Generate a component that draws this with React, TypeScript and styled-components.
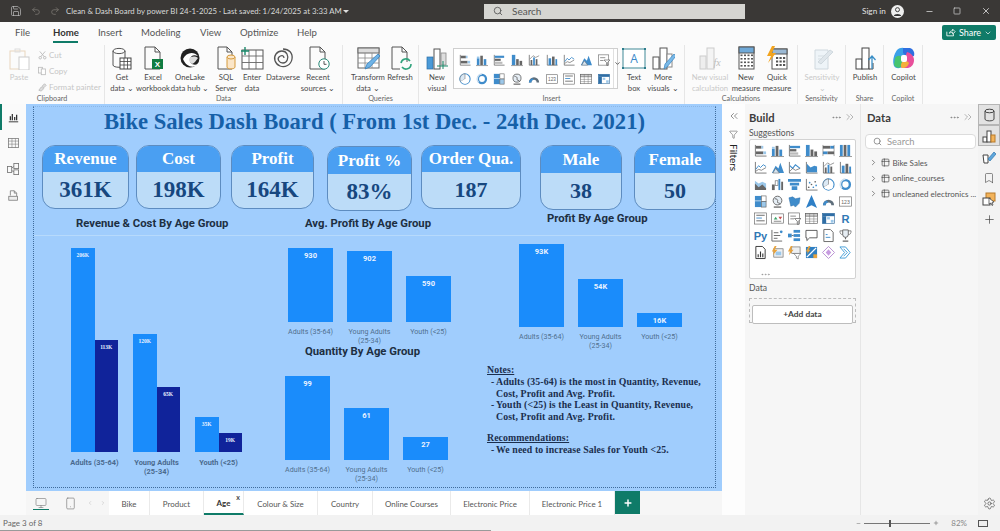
import React from "react";
import styled, { createGlobalStyle } from "styled-components";
import { Search, Minus, Square, X, ChevronDown, ChevronRight, ChevronsLeft, ChevronsRight, Bookmark, Plus, Settings, Undo2, Redo2, Save, Filter, Monitor, Smartphone, Table2, ChevronLeft, MoreHorizontal } from "lucide-react";

const Global = createGlobalStyle`
  html, body { margin: 0; padding: 0; background: #fff; }
  * { box-sizing: border-box; }
  body { font-family: "Lato", "Open Sans", "Liberation Sans", sans-serif; }
`;
const Page = styled.div`width:1000px;height:531px;display:flex;flex-direction:column;overflow:hidden;background:#fbfbfb;`;

/* ---------- Title bar ---------- */
const TitleBarRow = styled.header`height:22px;background:#3a3836;color:#e6e6e6;display:flex;align-items:center;flex:none;position:relative;overflow:hidden;`;
const QuickIcon = styled.span<{ $w: number; $dim?: boolean; $ml?: number }>`width:${p => p.$w}px;flex:none;margin-left:${p => p.$ml ?? 0}px;display:flex;justify-content:center;color:${p => (p.$dim ? "#77736f" : "#c8c8c8")};`;
const DocTitle = styled.span`font-size:7.8px;margin-left:4px;white-space:nowrap;color:#d8d8d8;width:277px;flex:none;`;
const Caret = styled.span`width:0;height:0;flex:none;border-left:3px solid transparent;border-right:3px solid transparent;border-top:3px solid #ddd;margin-right:135px;`;
const SearchBox = styled.div`width:261px;flex:none;height:15px;background:#d5d5d1;display:flex;align-items:center;gap:9px;padding-left:9px;color:#555;font-size:10px;`;
const SignIn = styled.span`font-size:8.2px;margin-left:117px;width:28.500px;flex:none;color:#e2e2e2;`;
const Avatar = styled.span`width:13px;height:13px;flex:none;border-radius:50%;background:#eee;display:flex;align-items:center;justify-content:center;`;
const WinButton = styled.span<{ $w: number; $ml?: number }>`width:${p => p.$w}px;flex:none;margin-left:${p => p.$ml ?? 0}px;display:flex;justify-content:center;color:#ddd;`;

/* ---------- Ribbon ---------- */
const Ribbon = styled.section`height:82px;background:#fbfbfb;flex:none;display:flex;flex-direction:column;`;
const TabRow = styled.nav`height:23px;display:flex;align-items:center;padding-left:15px;position:relative;font-size:9.6px;color:#4d4d4d;`;
const RibbonTab = styled.span<{ $w: number; $on?: boolean }>`width:${p => p.$w}px;height:23px;line-height:22px;position:relative;font-weight:${p => (p.$on ? 700 : 400)};color:${p => (p.$on ? "#333" : "#555")};
  ${p => p.$on ? `&::after{content:"";position:absolute;left:0;top:19px;width:25px;height:2px;background:#0f7b68;}` : ""}`;
const ShareButton = styled.button`position:absolute;left:942px;top:3px;width:54px;height:15px;border:0;border-radius:2px;background:#0f7b68;color:#fff;font:9px "Lato",sans-serif;display:flex;align-items:center;justify-content:center;gap:3px;padding:0;`;
const GroupRow = styled.div`flex:1;display:flex;height:59px;`;
const Group = styled.div<{ $w: number; $last?: boolean }>`width:${p => p.$w}px;flex:none;display:flex;flex-direction:column;${p => (p.$last ? "" : "border-right:1px solid #e6e6e6;")}`;
const GroupBody = styled.div<{ $pad?: number }>`flex:1;display:flex;padding-left:${p => p.$pad ?? 0}px;`;
const GroupLabel = styled.div`height:10px;line-height:10px;font-size:7.2px;text-align:center;color:#666;`;
const RibbonItem = styled.div<{ $w: number; $dim?: boolean; $ml?: number }>`width:${p => p.$w}px;flex:none;margin-left:${p => p.$ml ?? 0}px;display:flex;flex-direction:column;align-items:center;font-size:7.7px;line-height:10.5px;text-align:center;color:${p => (p.$dim ? "#c9c9c9" : "#4a4a4a")};white-space:nowrap;padding-top:1px;`;
const IconSlot = styled.div`height:24px;margin-bottom:2px;display:flex;align-items:flex-end;`;
const ClipColumn = styled.div`display:flex;flex-direction:column;gap:4px;font-size:8px;color:#c6c6c6;padding-top:4px;`;
const ClipRow = styled.div`display:flex;align-items:center;gap:2px;height:12px;white-space:nowrap;`;
const GalleryBox = styled.div`width:165px;height:41px;margin:3px 8px 0 5px;border:1px solid #cfcfcf;background:#fff;display:flex;flex:none;`;
const GalleryGrid = styled.div`flex:1;display:grid;grid-template-columns:repeat(9,17.4px);grid-auto-rows:19px;align-items:center;justify-items:center;padding:1px 0 0 2px;`;
const GalleryScroll = styled.div`width:10px;border-left:1px solid #e0e0e0;color:#555;display:flex;align-items:center;justify-content:center;padding-bottom:10px;`;

/* ---------- Body ---------- */
const Main = styled.main`height:411px;display:flex;flex:none;`;
const LeftRail = styled.aside`width:26px;flex:none;background:#fafafa;display:flex;flex-direction:column;position:relative;`;
const RailActive = styled.span`position:absolute;left:0;top:0;width:2px;height:26px;background:#0f7b68;`;
const RailIcon = styled.div`height:26px;display:flex;align-items:center;justify-content:center;color:#666;`;
const Center = styled.div`width:696px;flex:none;display:flex;flex-direction:column;`;
const Canvas = styled.div`height:387px;background:#a0cdfd;position:relative;flex:none;overflow:hidden;`;
const DotFrame = styled.div`position:absolute;left:7px;top:2px;width:683px;height:382px;border:1px dotted #3f6c9c;border-top-color:#8db8e6;`;
const Divider = styled.div`position:absolute;left:8px;top:131px;width:680px;height:1px;background:#b7dafc;`;
const Visual = styled.div<{ $x: number; $y: number }>`position:absolute;left:${p => p.$x}px;top:${p => p.$y}px;`;
const Heading = styled.h1`margin:0;width:683px;text-align:center;font:700 22.650px/26px "Liberation Serif",serif;color:#1660a8;white-space:nowrap;`;
const Kpi = styled.div<{ $w: number; $h: number }>`width:${p => p.$w}px;height:${p => p.$h}px;border:1px solid #5d8cc0;border-radius:13px;overflow:hidden;background:#bcdcf8;display:flex;flex-direction:column;`;
const KpiHead = styled.div<{ $h: number }>`height:${p => p.$h}px;flex:none;background:#4a9ff2;color:#fff;display:flex;align-items:center;justify-content:center;font:700 17px "Liberation Serif",serif;`;
const KpiValue = styled.div<{ $big?: boolean }>`flex:1;display:flex;align-items:center;justify-content:center;color:#17477f;font:700 ${p => (p.$big ? 23 : 22)}px "Liberation Serif",serif;`;
const SectionLabel = styled.div`font:700 11.3px "Roboto","Liberation Sans",sans-serif;color:#1d2f42;white-space:nowrap;`;
const ChartRow = styled.div<{ $gap: number }>`display:flex;gap:${p => p.$gap}px;`;
const ChartColumn = styled.div<{ $w: number }>`width:${p => p.$w}px;display:flex;flex-direction:column;align-items:center;`;
const Plot = styled.div<{ $h: number }>`height:${p => p.$h}px;width:100%;display:flex;align-items:flex-end;`;
const Bar = styled.div<{ $h: number; $dark?: boolean; $big?: boolean }>`flex:1;height:${p => p.$h}px;background:${p => (p.$dark ? "#10239a" : "#1a8cfb")};color:#e9f2ff;text-align:center;padding-top:3px;font:700 ${p => (p.$big ? "7.5px" : "5.5px")}/9px ${p => (p.$big ? '"Roboto",sans-serif' : '"Liberation Serif",serif')};`;
const AxisLabel = styled.div<{ $bold?: boolean }>`margin:${p => (p.$bold ? "6px -12px 0" : "5px -10px 0")};text-align:center;font:${p => (p.$bold ? 700 : 400)} ${p => (p.$bold ? 7.4 : 7.1)}px/9px "Roboto","Liberation Sans",sans-serif;color:${p => (p.$bold ? "#4a6a8e" : "#50708f")};white-space:pre-line;`;
const Notes = styled.div`font:700 9.8px/11.4px "Liberation Serif",serif;letter-spacing:.1px;color:#1b2f4e;width:225px;`;
const NoteHead = styled.div`text-decoration:underline;`;
const NoteList = styled.ul`list-style:none;margin:1px 0 0;padding:0 0 0 5px;`;
const NoteItem = styled.li`position:relative;padding-left:4px;width:215px;&::before{content:"-";position:absolute;left:-1px;top:0;}`;
const NoteSpacer = styled.div`height:10px;`;

/* ---------- Filters / panes ---------- */
const FilterPane = styled.aside`width:23px;flex:none;background:#fdfdfd;display:flex;flex-direction:column;align-items:center;padding-top:6px;color:#444;`;
const VerticalText = styled.span`writing-mode:vertical-rl;font-size:10px;font-weight:400;margin-top:5px;color:#222;`;
const Pane = styled.aside<{ $w: number; $line?: boolean; $pl?: number }>`width:${p => p.$w}px;flex:none;background:#f6f6f6;padding:6px 4px 0 ${p => p.$pl ?? 4}px;display:flex;flex-direction:column;${p => (p.$line ? "border-right:1px solid #e6e6e6;" : "")}`;
const PaneHead = styled.div`display:flex;align-items:center;height:14px;font-size:11.2px;font-weight:700;color:#3c3c3c;`;
const PaneTools = styled.span`margin-left:auto;display:flex;align-items:center;gap:2px;color:#888;`;
const SubLabel = styled.div<{ $mt: number }>`font-size:8.6px;color:#555;margin-top:${p => p.$mt}px;height:11px;line-height:11px;`;
const VizBox = styled.div`width:107px;height:140px;flex:none;background:#fff;border:1px solid #d2d2d2;border-radius:2px;margin-top:0;padding:2px 2px 0 2px;`;
const VizGrid = styled.div`display:grid;grid-template-columns:repeat(6,17px);grid-auto-rows:17px;align-items:center;justify-items:center;`;
const VizDots = styled.div`color:#888;padding:8px 0 0 8px;display:flex;`;
const DashBox = styled.div`width:107px;height:25px;border:1px dashed #bdbdbd;margin-top:4px;padding:2px;`;
const AddData = styled.button`width:100%;height:100%;border:1px solid #bdbdbd;border-radius:2px;background:#fff;font:700 8.4px "Lato",sans-serif;color:#444;padding:0;`;
const DataSearch = styled.div`height:15px;margin:10px -2px 0;background:#fff;border:1px solid #dcdcdc;border-radius:4px;display:flex;align-items:center;gap:5px;padding-left:7px;font-size:9.4px;color:#999;`;
const Tree = styled.div`margin-top:6px;display:flex;flex-direction:column;`;
const TreeRow = styled.div`height:15.6px;display:flex;align-items:center;gap:3px;padding-left:1.500px;font-size:8px;color:#555;white-space:nowrap;& > svg{flex:none;}`;
const RightRail = styled.aside`width:22px;flex:none;background:#f3f3f3;display:flex;flex-direction:column;align-items:center;color:#444;`;
const RailToggle = styled.div<{ $on?: boolean }>`width:22px;height:21px;display:flex;align-items:center;justify-content:center;${p => (p.$on ? "background:#e2e2e2;border:1px solid #b5b5b5;" : "")}`;
const RailGear = styled.div`margin-top:auto;height:24px;display:flex;align-items:center;`;

/* ---------- Page tabs / status ---------- */
const TabBar = styled.div`height:24px;background:#f6f6f6;display:flex;flex:none;`;
const ViewButton = styled.div<{ $w: number; $on?: boolean }>`width:${p => p.$w}px;display:flex;align-items:center;justify-content:center;color:#777;position:relative;
  ${p => p.$on ? `&::after{content:"";position:absolute;left:7px;right:7px;top:18px;height:1px;background:#0f7b68;}` : ""}`;
const PageTab = styled.div<{ $w: number; $on?: boolean }>`width:${p => p.$w}px;background:#fff;border-right:1px solid #eaeaea;display:flex;align-items:center;justify-content:center;font:400 7.9px "Lato",sans-serif;color:${p => (p.$on ? "#333" : "#555")};position:relative;padding-top:1px;
  ${p => p.$on ? `border-bottom:2px solid #0f7b68;font-weight:700;` : ""}`;
const TabClose = styled.span`position:absolute;right:3px;top:2px;font-size:7px;color:#444;line-height:8px;`;
const AddTab = styled.div`width:25px;height:23px;background:#0f7b68;color:#fff;display:flex;align-items:center;justify-content:center;`;
const StatusBar = styled.footer`height:16px;flex:none;background:#f2f2f2;display:flex;align-items:center;padding-left:3px;font-size:8px;color:#666;position:relative;&::after{content:"";position:absolute;left:0;bottom:0;width:491px;height:1px;background:#9a9a9a;}`;
const ZoomGroup = styled.div`margin-left:auto;display:flex;align-items:center;color:#555;`;
const ZoomTrack = styled.div`width:66px;height:1px;background:#777;margin:0 3px;position:relative;`;
const ZoomThumb = styled.span`position:absolute;left:25px;top:-3px;width:2px;height:7px;background:#555;`;
const ZoomText = styled.span`font-size:8px;color:#888;margin:0 11px 0 12px;`;
const FitBox = styled.span`width:10px;height:7px;border:1px solid #555;margin-right:12px;background:#eee;`;

/* ---------- Ribbon icons ---------- */
const S = { fill: "none", stroke: "#555", strokeWidth: 1 } as const;
function RIcon({ k, dim }: { k: string; dim?: boolean }) {
  const body: Record<string, React.ReactNode> = {
    paste: <><rect x="3" y="5" width="15" height="18" fill="none" stroke="#e9d6bd" /><rect x="12" y="11" width="10" height="13" fill="#fff" stroke="#ccc" /><rect x="8" y="3" width="5" height="3" fill="none" stroke="#ddd" /></>,
    get: <><path d="M3 5v14c0 3 12 3 12 0V5" {...S} /><ellipse cx="9" cy="5" rx="6" ry="2.6" {...S} /><rect x="10" y="12" width="11" height="11" fill="#fff" stroke="#444" /><path d="M10 15.5h11M10 19h11M14 12v11M17.5 12v11" stroke="#444" strokeWidth=".8" /></>,
    excel: <><path d="M4 1h10l5 5v17H4z" {...S} /><path d="M14 1v5h5" {...S} /><rect x="11" y="13" width="11" height="10" fill="#107c41" /><text x="16.5" y="21" fontSize="8" fontFamily="Liberation Sans" fontWeight="700" fill="#fff" textAnchor="middle">X</text></>,
    onelake: <><circle cx="12" cy="12" r="9.5" fill="#222" /><path d="M5 13c3-7 11-8 15-3-5-2-7 0-8 3-1 4 3 7 8 5-4 5-12 3-15-5z" fill="#fff" /><path d="M11 13c2-3 6-3 9-1-2 2-3 5-6 6-2-1-3-3-3-5z" fill="#ddd" /></>,
    sql: <><path d="M4 1h9l5 5v17H4z" {...S} /><path d="M13 1v5h5" {...S} /><path d="M13 11v10c0 2.500 8 2.500 8 0V11" fill="#fbe6c8" stroke="#d59a3c" /><ellipse cx="17" cy="11" rx="4" ry="2" fill="#fbe6c8" stroke="#d59a3c" /></>,
    enter: <><rect x="2" y="4" width="21" height="19" fill="#fff" stroke="#555" /><path d="M2 10h21M2 16.500h21M9 4v19M16 4v19" stroke="#666" strokeWidth=".9" /><path d="M1 5h8M5 1v8" stroke="#1a8a6b" strokeWidth="1.4" /></>,
    dataverse: <><path d="M12 3c6 0 10 4 9 10s-7 9-12 7-7-8-4-12 9-4 11 0 0 9-4 9-6-4-4-6 5-2 5 1" fill="none" stroke="#555" strokeWidth="1.3" /></>,
    recent: <><path d="M4 1h10l5 5v17H4z" {...S} /><path d="M14 1v5h5" {...S} /><circle cx="18" cy="18" r="5.2" fill="#fff" stroke="#2b8a78" /><path d="M18 15v3.300h2.500" stroke="#555" fill="none" /></>,
    transform: <><rect x="2" y="2" width="21" height="20" fill="#fff" stroke="#666" /><rect x="2" y="2" width="21" height="5" fill="#ddd" stroke="#666" /><path d="M2 12h21M2 17h21M9 7v15M16 7v15" stroke="#888" strokeWidth=".8" /><path d="M9 23l2-5L22 8l2 2-10 11z" fill="#6fb3e6" stroke="#2b78b8" strokeWidth=".7" /></>,
    refresh: <><path d="M4 1h10l5 5v10M12 23H4V1" {...S} /><path d="M14 1v5h5" {...S} /><path d="M13 17a5 5 0 0 1 9-2M23 18a5 5 0 0 1-9 3" fill="none" stroke="#2fa37c" strokeWidth="1.6" /></>,
    newvisual: <><rect x="2" y="11" width="6" height="12" fill="#4a9ad8" stroke="#2d6ea6" strokeWidth=".7" /><rect x="9" y="3" width="6" height="20" fill="#fff" stroke="#555" /><rect x="16" y="7" width="5" height="12" fill="#ddd" stroke="#888" strokeWidth=".8" /><path d="M12 20h11M18 15v8" stroke="#1a8a6b" strokeWidth="1" /></>,
    textbox: <><rect x="1" y="3" width="22" height="19" fill="#fff" stroke="#2c7d8c" strokeWidth=".9" /><path d="M0 2h2v2H0zM22 2h2v2h-2zM0 21h2v2H0zM22 21h2v2h-2z" fill="#2c7d8c" /><text x="12" y="17" fontSize="12" fontFamily="Open Sans" fill="#3a88c9" textAnchor="middle">A</text></>,
    more: <><rect x="2" y="11" width="6" height="12" fill="#fff" stroke="#555" /><rect x="9" y="2" width="7" height="21" fill="#fff" stroke="#555" /><rect x="16" y="8" width="5" height="13" fill="#fff" stroke="#888" /><path d="M13 23l1-5L23 8l2 2-9 11z" fill="#79b9e8" stroke="#3a82bd" strokeWidth=".7" /></>,
    calc: <><rect x="2" y="10" width="6" height="13" fill="#eee" stroke="#ccc" /><rect x="9" y="2" width="7" height="21" fill="#f4f4f4" stroke="#ccc" /><text x="19" y="20" fontSize="10" fontFamily="Liberation Serif" fontStyle="italic" fill="#bbb" textAnchor="middle">fx</text></>,
    measure: <><rect x="5" y="1" width="15" height="22" fill="#fff" stroke="#555" /><rect x="5" y="1" width="15" height="6" fill="#6fa9d8" stroke="#555" />{[9.500, 13, 16.500, 20].map(y => [7.500, 11, 14.500, 18].map(x => <rect key={x + "-" + y} x={x - 1} y={y - 1} width="2" height="1.600" fill="#555" />))}</>,
    quick: <><rect x="7" y="3" width="15" height="20" fill="#fff" stroke="#555" /><rect x="7" y="3" width="15" height="5" fill="#9bb9d4" stroke="#555" />{[11, 14.500, 18].map(y => [11, 14.500, 18].map(x => <rect key={x + "-" + y} x={x} y={y} width="2.200" height="2" fill="#555" />))}<path d="M7 0l-5 10h4l-3 7 8-10H7l3-7z" fill="#f2a41f" /></>,
    sens: <><path d="M5 4h13v19H5z" fill="#eef4f8" stroke="#cfd8de" /><path d="M8 16L20 4l3 2L11 18z" fill="#dfe6eb" stroke="#cfd8de" /><path d="M8 10h6M8 13h4" stroke="#d5dde2" /></>,
    publish: <><rect x="3" y="13" width="6" height="10" fill="#fff" stroke="#444" /><rect x="9" y="2" width="7" height="21" fill="#fff" stroke="#444" /><path d="M16 12v11h4v-6" fill="#fff" stroke="#444" /><path d="M19 23V11M15.500 14l3.500-4 3.500 4" fill="none" stroke="#3a8fc7" strokeWidth="1.300" /></>,
    copilot: <><path d="M5 4c3-3 8-3 10 0l-4 16c-3 3-7 3-9 0-2-5 0-12 3-16z" fill="#3aa0e8" /><path d="M11 2h7c3 1 5 4 4 8l-6 2-5-5z" fill="#2f6fe0" /><path d="M3 12c2-3 6-3 8 0l-1 8c-3 3-6 2-8-1z" fill="#47c46f" /><path d="M15 6c4 1 7 4 7 8s-2 7-6 8h-6c-2-1-1-3 1-4 2-3 2-8 4-12z" fill="#e84f9b" /><path d="M11 15c2 0 5 0 6 2-1 3-3 5-7 5-2-2-1-5 1-7z" fill="#f4b03c" /><rect x="9" y="9" width="6" height="7" rx="2" fill="#fff" /></>,
  };
  return <svg width="24" height="24" viewBox="0 0 24 24" style={{ opacity: dim ? 0.9 : 1 }}>{body[k]}</svg>;
}

/* ---------- Gallery icons ---------- */
const B = "#3f8ccb", G = "#666", L = "#9cc8ea", O = "#e8a33d";
function Mini({ k, size = 13 }: { k: string; size?: number }) {
  const r = (x: number, y: number, w: number, h: number, f = B, s = "none") => <rect x={x} y={y} width={w} height={h} fill={f} stroke={s} strokeWidth=".7" />;
  const base = <path d="M1.500 1v12h12" fill="none" stroke={G} strokeWidth=".9" />;
  const d: Record<string, React.ReactNode> = {
    hbarS: <>{base}{r(2, 2, 6, 3, G)}{r(8, 2, 2, 3, L)}{r(2, 8, 8, 3, G)}{r(10, 8, 3, 3, L)}</>,
    colS: <>{r(1, 5, 3, 8, B)}{r(5, 2, 3, 11, G)}{r(9, 6, 3, 7, B)}{r(1, 3, 3, 2, L)}<path d="M0 13.500h14" stroke={G} strokeWidth=".7" /></>,
    hbar: <>{base}{r(2, 2, 11, 2.500, B)}{r(2, 5.500, 7, 2.500, G)}{r(2, 9, 9, 2.500, "#bbb")}</>,
    col: <>{r(1, 1, 4, 12, B)}{r(6, 6, 3, 7, G)}{r(10, 8, 3, 5, G)}<path d="M0 13.500h14" stroke={G} strokeWidth=".7" /></>,
    hbar100: <>{r(1, 2, 8, 3, G)}{r(9, 2, 4, 3, B)}{r(1, 8, 5, 3, B)}{r(6, 8, 7, 3, G)}<path d="M1 1v12M13 1v12" stroke={G} strokeWidth=".6" /></>,
    col100: <>{r(1, 1, 3, 12, B)}{r(5, 1, 3, 12, G)}{r(9, 1, 3, 12, B)}<path d="M0 13.500h14" stroke={G} strokeWidth=".7" /></>,
    line: <>{base}<path d="M2 9l3-4 2 2 3-3 3 2" fill="none" stroke={B} strokeWidth="1" /><path d="M2 11l3-2 3 1 5-3" fill="none" stroke={G} strokeWidth=".8" /></>,
    mountain: <><path d="M1 13l4-8 3 3 2-6 4 11z" fill={B} /><path d="M2 13l3-5 4 5z" fill="#d8e6f2" stroke={G} strokeWidth=".6" /></>,
    lineArea: <>{base}<path d="M2 5l3 3 3-4 5 4" fill="none" stroke={B} strokeWidth="1.200" /><path d="M2 11l3-3 3 2 5-2" fill="none" stroke={G} strokeWidth=".8" /></>,
    area: <>{base}<path d="M2 3l4 4 4-2 3 1v6H2z" fill={B} /></>,
    lineCol: <>{base}{r(3, 7, 2, 6, G)}{r(6, 4, 2, 9, B)}{r(9, 6, 2, 7, G)}<path d="M2 6l4-4 3 2 4-2" fill="none" stroke={G} strokeWidth=".7" /></>,
    lineCol2: <>{base}{r(3, 5, 3, 8, B)}{r(7, 3, 3, 10, G)}{r(11, 6, 2, 7, B)}</>,
    ribbon: <><path d="M1 3l4 3 4-2 4 2v6H1z" fill={L} /><path d="M1 6l4 4 4-3 4 4v2H1z" fill={G} /></>,
    water: <>{r(1, 7, 3, 6, G)}{r(4.500, 3, 3, 5, "#fff", G)}{r(8, 1, 2, 12, B)}{r(11, 4, 2, 9, G)}</>,
    funnel: <path d="M0 1h14v3H0zM2 5h10v3H2zM4 9h6v4H4z" fill={B} />,
    scatter: <>{base}<g fill={G}><circle cx="4" cy="10" r=".9" /><circle cx="7" cy="7" r=".9" /><circle cx="11" cy="4" r=".9" /></g><g fill={B}><circle cx="5" cy="5" r=".9" /><circle cx="9" cy="10" r=".9" /><circle cx="12" cy="8" r=".9" /></g></>,
    pie: <><circle cx="7" cy="7" r="6" fill="#fff" stroke={B} strokeWidth="1.200" /><path d="M7 7V1a6 6 0 0 0-5 9z" fill="#dbe9f5" stroke={G} strokeWidth=".6" /><path d="M7 7L2 10a6 6 0 0 0 10 0z" fill="#fff" /></>,
    donut: <><circle cx="7" cy="7" r="4.700" fill="none" stroke={B} strokeWidth="2.600" /><path d="M7 1a6 6 0 0 0-4 10" fill="none" stroke="#cfe1f1" strokeWidth="1.600" /></>,
    tree: <>{r(1, 1, 7, 12, B)}{r(8, 1, 5, 6, "#fff", G)}{r(8, 7, 5, 6, L, G)}{r(1, 6, 7, .7, "#fff")}</>,
    globe: <><circle cx="7" cy="6" r="4.700" fill="#e6eef5" stroke={G} strokeWidth="1" /><path d="M4 4c2 0 4 1 3 3s3 1 3 3" fill="none" stroke={G} /><path d="M3 13h8" stroke={G} strokeWidth="1.400" /></>,
    fmap: <path d="M1 3l4-1 3 2 5-1-1 6-4 4-2-2-3 1z" fill={B} stroke="#2d6ea6" strokeWidth=".5" />,
    arrow: <path d="M7 0l6 14-6-3-6 3z" fill="#2e7fc6" />,
    gauge: <><path d="M1 11a6 6 0 0 1 12 0h-3a3 3 0 0 0-6 0z" fill="#5f6f7c" /><path d="M1 11a6 6 0 0 1 4-5l2 2a3 3 0 0 0-3 3z" fill={B} /></>,
    card: <>{r(.5, 2, 13, 10, "#fff", G)}<text x="7" y="9.200" fontSize="5.500" fill={G} fontFamily="Liberation Sans" textAnchor="middle">123</text></>,
    multi: <>{r(.5, 1, 13, 12, "#fff", G)}{r(2.500, 3, 9, 1, G)}{r(2.500, 6, 6, 1, B)}{r(2.500, 9, 9, 1, G)}</>,
    kpi: <>{r(.5, 2, 13, 10, "#fff", G)}<path d="M3 8l2-3 2 3z" fill="#3fa36a" /><path d="M8 5h4l-2 3z" fill="#c9504f" />{r(3, 9.500, 8, .8, G)}</>,
    slicer: <>{r(.5, 1, 12, 12, "#fff", G)}{r(2.500, 4, 6, .8, G)}{r(2.500, 7, 4, .8, G)}<path d="M7 7h7l-3 3v4l-1-1v-3z" fill="#fff" stroke={G} strokeWidth=".8" /></>,
    table: <>{r(.5, 1.500, 13, 11, "#fff", G)}{r(.5, 1.500, 13, 3, "#ccc", G)}<path d="M.5 7.500h13M.5 10h13M5 1.500v11M9.500 1.500v11" stroke={G} strokeWidth=".5" /></>,
    matrix: <>{r(.5, 1.500, 13, 11, "#fff", "#3a6f9e")}{r(.5, 1.500, 13, 3, "#2f6ea6")}{r(.5, 4.500, 4, 8, "#2f6ea6")}{r(5.500, 5.500, 3, 2.500, L)}{r(9.500, 8.500, 3, 3, L)}</>,
    R: <text x="7" y="12" fontSize="12" fontWeight="700" fill="#3078b5" fontFamily="Liberation Sans" textAnchor="middle">R</text>,
    Py: <text x="7" y="12" fontSize="12" fontWeight="700" fill="#3078b5" fontFamily="Liberation Sans" textAnchor="middle">Py</text>,
    key: <><path d="M1 1v12h11" fill="none" stroke={G} /><path d="M3 4h5M3 7h7M3 10h4" stroke={G} strokeWidth="1" /><circle cx="11" cy="3" r="1.500" fill={B} /></>,
    decomp: <>{r(0, 5, 4, 4, B)}{r(6, 1, 7, 3, B)}{r(6, 5.500, 7, 3, B)}{r(6, 10, 7, 3, B)}<path d="M4 7h2" stroke={G} /></>,
    chat: <path d="M1 1.500h12v8H5l-3 3v-3H1z" fill="#fff" stroke="#444" strokeWidth=".9" />,
    paged: <><path d="M2 .5h7l3 3v10H2z" fill="#fff" stroke={G} /><path d="M4 6h2M4 9h5" stroke={B} /></>,
    trophy: <><path d="M4 1h6v5a3 3 0 0 1-6 0z" fill="#e7eef4" stroke={G} /><path d="M4 2H1c0 3 1 4 3 4M10 2h3c0 3-1 4-3 4" fill="none" stroke={G} strokeWidth=".8" /><path d="M7 9v2M4 13h6" stroke={G} strokeWidth="1.200" /></>,
    report: <><path d="M2 .5h7l3 3v10H2z" fill="#fff" stroke="#333" /><path d="M4.500 12V9M7 12V6M9.500 12V8" stroke="#333" strokeWidth="1.200" /></>,
    o1: <>{r(3, 3, 10, 9, "#eef0f2", G)}{r(5, 6, 6, 4, L)}<path d="M4 0l-3 6h2l-1 4 5-6H4l2-4z" fill={O} /></>,
    o2: <>{r(4, 1, 9, 7, "#eef0f2", G)}<path d="M6 8h8l-3 3v3l-2-1v-2z" fill="#fff" stroke={G} strokeWidth=".7" /><path d="M3 0L0 6h2l-1 4 5-6H3l2-4z" fill={O} /></>,
    o3: <>{r(1, 1, 12, 12, "#2f7fc2")}<path d="M2 12L12 2" stroke="#fff" strokeWidth="1.400" /><path d="M4 0L1 6h2L2 9l4-5H4l2-4z" fill={O} /><rect x="9" y="9" width="4" height="4" fill={O} /></>,
    diamond: <><path d="M7 .5L13.500 7 7 13.500.5 7z" fill="#fff" stroke="#b58ad0" /><path d="M7 3.500L10 7 7 10.500 4 7z" fill="#c79be0" /></>,
    chev: <><path d="M1 1h6l5 6-5 6H1l5-6z" fill="#fff" stroke="#3f9bd6" /><path d="M5 3l4 4-4 4" fill="none" stroke="#3f9bd6" /></>,
  };
  return <svg width={size} height={size} viewBox="0 0 14 14" overflow="visible">{d[k]}</svg>;
}

const ribbonViz = ["hbarS","colS","hbar","col","lineCol","lineCol2","line","mountain","slicer","pie","donut","tree","globe","gauge","card","multi","table","matrix"];
const buildViz = ["hbarS","colS","hbar","col","hbar100","col100","line","mountain","lineArea","area","lineCol","lineCol2","ribbon","water","funnel","scatter","pie","donut","tree","globe","fmap","arrow","gauge","card","multi","kpi","slicer","table","matrix","R","Py","key","decomp","chat","paged","trophy","report","o1","o2","o3","diamond","chev"];

const kpis = [
  { x: 16, y: 41, w: 87, h: 64, hh: 26, t: "Revenue", v: "361K", big: true },
  { x: 110, y: 41, w: 85, h: 64, hh: 26, t: "Cost", v: "198K", big: true },
  { x: 205, y: 41, w: 83, h: 64, hh: 26, t: "Profit", v: "164K", big: true },
  { x: 301, y: 42, w: 85, h: 65, hh: 27, t: "Profit %", v: "83%", big: true },
  { x: 395, y: 41, w: 100, h: 64, hh: 26, t: "Order Qua.", v: "187" },
  { x: 514, y: 41, w: 82, h: 65, hh: 27, t: "Male", v: "38" },
  { x: 608, y: 41, w: 82, h: 65, hh: 27, t: "Female", v: "50" },
];
const xl = ["Adults (35-64)", "Young Adults\n(25-34)", "Youth (<25)"];
const singleCharts = [
  { x: 262, y: 144, plot: 74, bars: [[74, "930"], [71, "902"], [46, "590"]] },
  { x: 259, y: 272, plot: 84, bars: [[84, "99"], [52, "61"], [23, "27"]] },
  { x: 493, y: 140, plot: 83, bars: [[83, "93K"], [48, "54K"], [14, "16K"]] },
] as const;
const clusters = [
  { a: [204, "206K"], b: [112, "113K"], l: xl[0] },
  { a: [118, "120K"], b: [65, "65K"], l: xl[1] },
  { a: [35, "35K"], b: [19, "19K"], l: xl[2] },
] as const;

export default function App() {
  return (
    <Page>
      <Global />
      <TitleBarRow>
        <QuickIcon $w={28} $ml={2}><Save size={12} strokeWidth={1.3} /></QuickIcon>
        <QuickIcon $w={12} $dim><Undo2 size={10} /></QuickIcon>
        <QuickIcon $w={14} $dim $ml={6}><Redo2 size={10} /></QuickIcon>
        <DocTitle>Clean &amp; Dash Board by power BI 24-1-2025 · Last saved: 1/24/2025 at 3:33 AM</DocTitle>
        <Caret />
        <SearchBox><Search size={10} />Search</SearchBox>
        <SignIn>Sign in</SignIn>
        <Avatar><svg width="11" height="11" viewBox="0 0 12 12"><circle cx="6" cy="4" r="2.2" fill="none" stroke="#333" /><path d="M2 11c0-3 8-3 8 0z" fill="#333" /></svg></Avatar>
        <WinButton $w={40} $ml={5.5}><Minus size={9} /></WinButton>
        <WinButton $w={16}><Square size={8} /></WinButton>
        <WinButton $w={42}><X size={10} /></WinButton>
      </TitleBarRow>

      <Ribbon>
        <TabRow>
          <RibbonTab $w={38}>File</RibbonTab>
          <RibbonTab $w={45} $on>Home</RibbonTab>
          <RibbonTab $w={43}>Insert</RibbonTab>
          <RibbonTab $w={59}>Modeling</RibbonTab>
          <RibbonTab $w={40}>View</RibbonTab>
          <RibbonTab $w={57}>Optimize</RibbonTab>
          <RibbonTab $w={30}>Help</RibbonTab>
          <ShareButton><svg width="10" height="9" viewBox="0 0 12 10" fill="none" stroke="#fff"><path d="M1 4v5h8V7M4 6c0-2 2-3 4-3V1l3 3-3 3V5c-2 0-3 0-4 1z" /></svg>Share<ChevronDown size={8} /></ShareButton>
        </TabRow>
        <GroupRow>
          <Group $w={105}>
            <GroupBody>
              <RibbonItem $w={38} $dim><IconSlot><RIcon k="paste" /></IconSlot>Paste</RibbonItem>
              <ClipColumn>
                <ClipRow><svg width="9" height="10" viewBox="0 0 10 10" fill="none" stroke="#bbb"><path d="M2 1l5 6M8 1L3 7" /><circle cx="2.500" cy="8" r="1.400" /><circle cx="7.500" cy="8" r="1.400" /></svg>Cut</ClipRow>
                <ClipRow><svg width="9" height="10" viewBox="0 0 11 10" fill="none" stroke="#bbb"><rect x=".5" y=".5" width="5" height="7" /><rect x="4" y="2.500" width="5" height="7" fill="#fff" /></svg>Copy</ClipRow>
                <ClipRow><svg width="9" height="10" viewBox="0 0 11 10" fill="#ddd" stroke="#bbb"><path d="M1 9l3-4 3 2-3 3zM5 4l3-3 2 2-3 3z" /></svg>Format painter</ClipRow>
              </ClipColumn>
            </GroupBody>
            <GroupLabel>Clipboard</GroupLabel>
          </Group>
          <Group $w={238}>
            <GroupBody>
              <RibbonItem $w={34}><IconSlot><RIcon k="get" /></IconSlot>Get<br />data ⌄</RibbonItem>
              <RibbonItem $w={28}><IconSlot><RIcon k="excel" /></IconSlot>Excel<br />workbook</RibbonItem>
              <RibbonItem $w={46}><IconSlot><RIcon k="onelake" /></IconSlot>OneLake<br />data hub ⌄</RibbonItem>
              <RibbonItem $w={26}><IconSlot><RIcon k="sql" /></IconSlot>SQL<br />Server</RibbonItem>
              <RibbonItem $w={26}><IconSlot><RIcon k="enter" /></IconSlot>Enter<br />data</RibbonItem>
              <RibbonItem $w={36}><IconSlot><RIcon k="dataverse" /></IconSlot>Dataverse</RibbonItem>
              <RibbonItem $w={34}><IconSlot><RIcon k="recent" /></IconSlot>Recent<br />sources ⌄</RibbonItem>
            </GroupBody>
            <GroupLabel>Data</GroupLabel>
          </Group>
          <Group $w={76}>
            <GroupBody $pad={6}>
              <RibbonItem $w={38}><IconSlot><RIcon k="transform" /></IconSlot>Transform<br />data ⌄</RibbonItem>
              <RibbonItem $w={26}><IconSlot><RIcon k="refresh" /></IconSlot>Refresh</RibbonItem>
            </GroupBody>
            <GroupLabel>Queries</GroupLabel>
          </Group>
          <Group $w={266}>
            <GroupBody $pad={7}>
              <RibbonItem $w={22}><IconSlot><RIcon k="newvisual" /></IconSlot>New<br />visual</RibbonItem>
              <GalleryBox>
                <GalleryGrid>{ribbonViz.map((k, i) => <Mini key={i} k={k} size={12} />)}</GalleryGrid>
                <GalleryScroll><ChevronDown size={7} strokeWidth={3} /></GalleryScroll>
              </GalleryBox>
              <RibbonItem $w={16}><IconSlot><RIcon k="textbox" /></IconSlot>Text<br />box</RibbonItem>
              <RibbonItem $w={42}><IconSlot><RIcon k="more" /></IconSlot>More<br />visuals ⌄</RibbonItem>
            </GroupBody>
            <GroupLabel>Insert</GroupLabel>
          </Group>
          <Group $w={113}>
            <GroupBody $pad={5}>
              <RibbonItem $w={40} $dim><IconSlot><RIcon k="calc" /></IconSlot>New visual<br />calculation</RibbonItem>
              <RibbonItem $w={32}><IconSlot><RIcon k="measure" /></IconSlot>New<br />measure</RibbonItem>
              <RibbonItem $w={30}><IconSlot><RIcon k="quick" /></IconSlot>Quick<br />measure</RibbonItem>
            </GroupBody>
            <GroupLabel>Calculations</GroupLabel>
          </Group>
          <Group $w={48}>
            <GroupBody>
              <RibbonItem $w={48} $dim><IconSlot><RIcon k="sens" /></IconSlot>Sensitivity<br />⌄</RibbonItem>
            </GroupBody>
            <GroupLabel>Sensitivity</GroupLabel>
          </Group>
          <Group $w={38}>
            <GroupBody>
              <RibbonItem $w={38}><IconSlot><RIcon k="publish" /></IconSlot>Publish</RibbonItem>
            </GroupBody>
            <GroupLabel>Share</GroupLabel>
          </Group>
          <Group $w={39}>
            <GroupBody>
              <RibbonItem $w={39}><IconSlot><RIcon k="copilot" /></IconSlot>Copilot</RibbonItem>
            </GroupBody>
            <GroupLabel>Copilot</GroupLabel>
          </Group>
        </GroupRow>
      </Ribbon>

      <Main>
        <LeftRail>
          <RailActive />
          <RailIcon><svg width="11" height="11" viewBox="0 0 14 13"><path d="M1 12h12" stroke="#333" strokeWidth="1.200" /><path d="M3 10V5M5.500 10V2M8.500 10V6M11 10V3" stroke="#333" strokeWidth="1.600" /></svg></RailIcon>
          <RailIcon><svg width="11" height="10" viewBox="0 0 14 13" fill="none" stroke="#777"><rect x=".5" y=".5" width="13" height="12" /><path d="M.5 4h13M.5 8h13M5 .5v12M9.500 .5v12" strokeWidth=".7" /></svg></RailIcon>
          <RailIcon><svg width="12" height="12" viewBox="0 0 14 14" fill="none" stroke="#777"><rect x=".5" y="4" width="5" height="7" /><rect x="8" y=".5" width="5.500" height="6" /><rect x="8" y="8" width="5.500" height="5.500" /><path d="M5.500 6L8 4M5.500 9L8 10" /></svg></RailIcon>
          <RailIcon><svg width="11" height="11" viewBox="0 0 14 14" fill="none" stroke="#777"><path d="M3 7V1h5l3 3v4M8 1v3h3" /><rect x="1" y="8" width="11" height="5" fill="#eee" /></svg></RailIcon>
        </LeftRail>

        <Center>
          <Canvas>
            <DotFrame />
            <Divider />
            <Visual $x={7} $y={5}><Heading>Bike Sales Dash Board ( From 1st Dec. - 24th Dec. 2021)</Heading></Visual>
            {kpis.map(c => (
              <Visual key={c.t} $x={c.x} $y={c.y}>
                <Kpi $w={c.w} $h={c.h}>
                  <KpiHead $h={c.hh}>{c.t}</KpiHead>
                  <KpiValue $big={c.big}>{c.v}</KpiValue>
                </Kpi>
              </Visual>
            ))}
            <Visual $x={50} $y={113}><SectionLabel>Revenue &amp; Cost By Age Group</SectionLabel></Visual>
            <Visual $x={279} $y={113}><SectionLabel>Avg. Profit By Age Group</SectionLabel></Visual>
            <Visual $x={521} $y={108}><SectionLabel>Profit By Age Group</SectionLabel></Visual>
            <Visual $x={279} $y={241}><SectionLabel>Quantity By Age Group</SectionLabel></Visual>

            <Visual $x={45} $y={144}>
              <ChartRow $gap={15}>
                {clusters.map(c => (
                  <ChartColumn key={c.l} $w={47}>
                    <Plot $h={204}>
                      <Bar $h={c.a[0]}>{c.a[1]}</Bar>
                      <Bar $h={c.b[0]} $dark>{c.b[1]}</Bar>
                    </Plot>
                    <AxisLabel $bold>{c.l}</AxisLabel>
                  </ChartColumn>
                ))}
              </ChartRow>
            </Visual>
            {singleCharts.map(ch => (
              <Visual key={ch.x} $x={ch.x} $y={ch.y}>
                <ChartRow $gap={14}>
                  {ch.bars.map((b, i) => (
                    <ChartColumn key={i} $w={45}>
                      <Plot $h={ch.plot}><Bar $h={b[0]} $big>{b[1]}</Bar></Plot>
                      <AxisLabel>{xl[i]}</AxisLabel>
                    </ChartColumn>
                  ))}
                </ChartRow>
              </Visual>
            ))}
            <Visual $x={461} $y={260}>
              <Notes>
                <NoteHead>Notes:</NoteHead>
                <NoteList>
                  <NoteItem>Adults (35-64) is the most in Quantity, Revenue, Cost, Profit and Avg. Profit.</NoteItem>
                  <NoteItem>Youth (&lt;25) is the Least in Quantity, Revenue, Cost, Profit and Avg. Profit.</NoteItem>
                </NoteList>
                <NoteSpacer />
                <NoteHead>Recommendations:</NoteHead>
                <NoteList>
                  <NoteItem>We need to increase Sales for Youth &lt;25.</NoteItem>
                </NoteList>
              </Notes>
            </Visual>
          </Canvas>
          <TabBar>
            <ViewButton $w={30} $on><Monitor size={12} strokeWidth={1.2} /></ViewButton>
            <ViewButton $w={28}><Smartphone size={13} strokeWidth={1.2} /></ViewButton>
            <ViewButton $w={12}><ChevronLeft size={6} color="#bbb" /></ViewButton>
            <ViewButton $w={13}><ChevronRight size={6} color="#bbb" /></ViewButton>
            <PageTab $w={41}>Bike</PageTab>
            <PageTab $w={54}>Product</PageTab>
            <PageTab $w={40} $on>Age<TabClose>x</TabClose></PageTab>
            <PageTab $w={74}>Colour &amp; Size</PageTab>
            <PageTab $w={55}>Country</PageTab>
            <PageTab $w={78}>Online Courses</PageTab>
            <PageTab $w={79}>Electronic Price</PageTab>
            <PageTab $w={85}>Electronic Price 1</PageTab>
            <AddTab><Plus size={10} strokeWidth={3.5} /></AddTab>
          </TabBar>
        </Center>

        <FilterPane>
          <ChevronsLeft size={12} strokeWidth={1.2} />
          <Filter size={9} strokeWidth={1.3} style={{ marginTop: 8 }} />
          <VerticalText>Filters</VerticalText>
        </FilterPane>

        <Pane $w={116} $line>
          <PaneHead>Build<PaneTools><MoreHorizontal size={11} /><ChevronsRight size={12} strokeWidth={1.2} /></PaneTools></PaneHead>
          <SubLabel $mt={4}>Suggestions</SubLabel>
          <VizBox>
            <VizGrid>{buildViz.map((k, i) => <Mini key={i} k={k} />)}</VizGrid>
            <VizDots><MoreHorizontal size={11} strokeWidth={1.2} /></VizDots>
          </VizBox>
          <SubLabel $mt={4}>Data</SubLabel>
          <DashBox><AddData>+Add data</AddData></DashBox>
        </Pane>

        <Pane $w={117} $pl={6}>
          <PaneHead>Data<PaneTools><MoreHorizontal size={11} /><ChevronsRight size={12} strokeWidth={1.2} /></PaneTools></PaneHead>
          <DataSearch><Search size={9} color="#777" />Search</DataSearch>
          <Tree>
            {["Bike Sales", "online_courses", "uncleaned electronics ..."].map(t => (
              <TreeRow key={t}><ChevronRight size={9} color="#666" /><Table2 size={9} color="#555" />{t}</TreeRow>
            ))}
          </Tree>
        </Pane>

        <RightRail>
          <RailToggle $on><svg width="13" height="14" viewBox="0 0 13 14" fill="none" stroke="#444"><path d="M2 3v8c0 2.500 9 2.500 9 0V3" /><ellipse cx="6.500" cy="3" rx="4.500" ry="1.800" /></svg></RailToggle>
          <RailToggle $on><svg width="14" height="14" viewBox="0 0 14 14"><rect x="1" y="8" width="4" height="5" fill="#fff" stroke="#444" /><rect x="5" y="2" width="4" height="11" fill="#fff" stroke="#444" /><rect x="9" y="6" width="4" height="7" fill="#f3b35a" stroke="#b87b2b" /></svg></RailToggle>
          <RailToggle><svg width="14" height="14" viewBox="0 0 14 14"><path d="M1 5h5v8H2z" fill="#fff" stroke="#444" /><path d="M6 9l6-7 2 2-6 7z" fill="#5fa7dc" stroke="#2f75ad" strokeWidth=".7" /></svg></RailToggle>
          <RailToggle><Bookmark size={12} strokeWidth={1.2} /></RailToggle>
          <RailToggle><svg width="14" height="14" viewBox="0 0 14 14"><rect x="4" y="1" width="9" height="8" fill="#f3b35a" stroke="#b87b2b" /><rect x="1" y="6" width="7" height="7" fill="#fff" stroke="#444" /><path d="M7 6l5 4-2 .5 1 2.500-1 .5-1-2.500-2 1z" fill="#fff" stroke="#333" strokeWidth=".7" /></svg></RailToggle>
          <RailToggle><Plus size={13} strokeWidth={1.3} /></RailToggle>
          <RailGear><Settings size={13} strokeWidth={1.2} /></RailGear>
        </RightRail>
      </Main>

      <StatusBar>
        Page 3 of 8
        <ZoomGroup>
          <Minus size={5} />
          <ZoomTrack><ZoomThumb /></ZoomTrack>
          <Plus size={6} />
          <ZoomText>82%</ZoomText>
          <FitBox />
        </ZoomGroup>
      </StatusBar>
    </Page>
  );
}
